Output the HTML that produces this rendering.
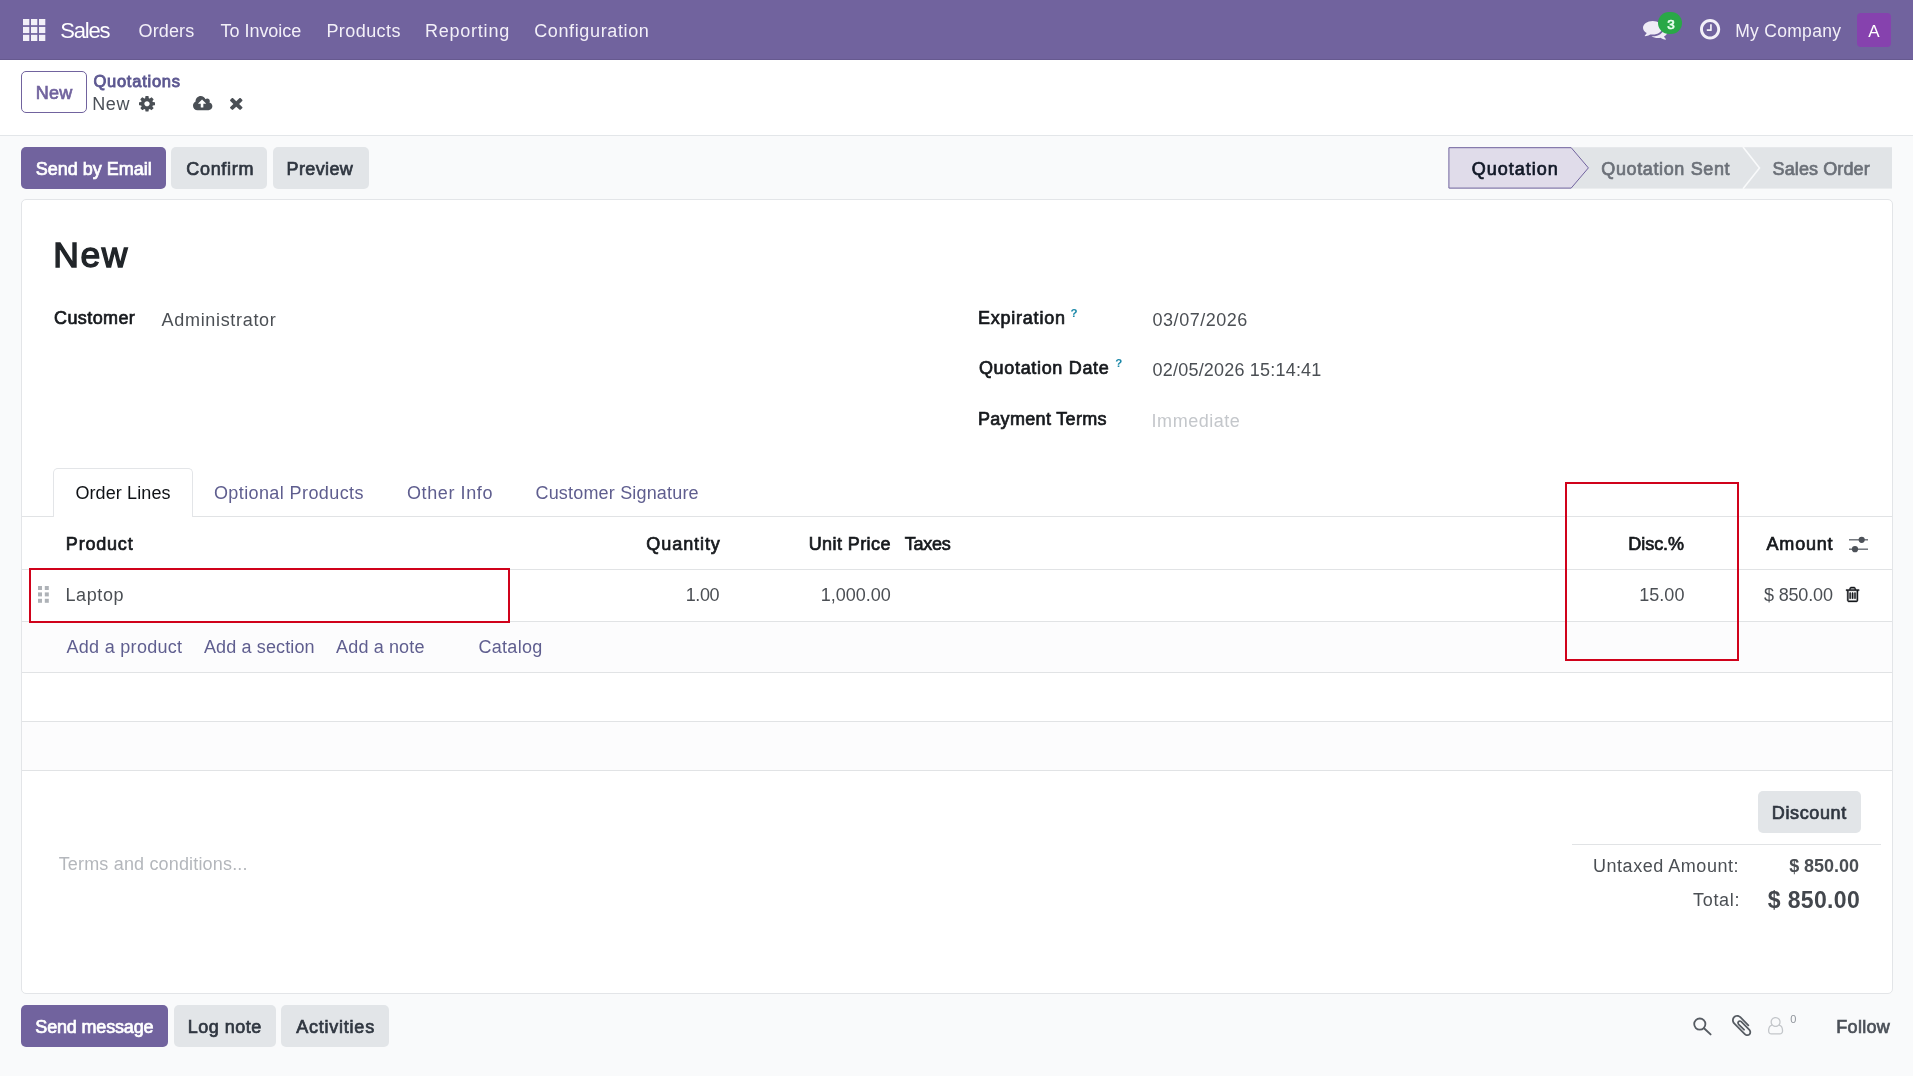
<!DOCTYPE html>
<html lang="en">
<head>
<meta charset="utf-8">
<title>Odoo - New Quotation</title>
<style>
html,body{margin:0;padding:0}
body{width:1913px;height:1076px;overflow:hidden;background:#f9fafb;position:relative;font-family:"Liberation Sans",sans-serif;}
.a{position:absolute;box-sizing:border-box}
.t{position:absolute;white-space:nowrap;line-height:1;font-family:"Liberation Sans",sans-serif;font-weight:normal}
.t.b{font-weight:bold}
.t.m{-webkit-text-stroke:0.7px currentColor}
.t.m2{-webkit-text-stroke:0.85px currentColor}
.t.h{-webkit-text-stroke:1.4px currentColor}
.ic{position:absolute;overflow:visible}
.hl{position:absolute;height:1px;background:#e1e3e5}
.btn{position:absolute;border-radius:5px;box-sizing:border-box}
.sec{background:#e2e5e8}
.pri{background:#71639e}
</style>
</head>
<body>
<!-- navbar -->
<div class="a" style="left:0;top:0;width:1913px;height:60px;background:#71639e;border-bottom:1px solid #66598f"></div>
<svg class="ic" style="left:22.7px;top:19.1px;width:22.3px;height:22px" viewBox="0 0 22.3 22"><g fill="#f3f0f8">
<rect x="0" y="0" width="6.3" height="6.2"/><rect x="8" y="0" width="6.3" height="6.2"/><rect x="16" y="0" width="6.3" height="6.2"/>
<rect x="0" y="7.9" width="6.3" height="6.2"/><rect x="8" y="7.9" width="6.3" height="6.2"/><rect x="16" y="7.9" width="6.3" height="6.2"/>
<rect x="0" y="15.8" width="6.3" height="6.2"/><rect x="8" y="15.8" width="6.3" height="6.2"/><rect x="16" y="15.8" width="6.3" height="6.2"/>
</g></svg>
<svg class="ic" style="left:1642.8px;top:20.7px;width:24.70px;height:18.70px" viewBox="0 -1280 1792 1408.203066359433" preserveAspectRatio="none"><path fill="#efecf6" stroke="#efecf6" stroke-width="0" transform="scale(1,-1)" d="M1408 768C1408 1051 1093 1280 704 1280C315 1280 0 1051 0 768C0 606 104 461 266 367C232 284 188 245 149 201C138 188 125 176 129 157C129 157 129 157 129 157C132 140 146 128 161 128C162 128 163 128 164 128C194 132 223 137 250 144C351 170 445 213 528 272C584 262 643 256 704 256C1093 256 1408 485 1408 768ZM1792 512C1792 679 1682 827 1513 920C1528 871 1536 820 1536 768C1536 589 1444 424 1277 302C1122 190 919 128 704 128C675 128 645 130 616 132C741 50 907 0 1088 0C1149 0 1208 6 1264 16C1347 -43 1441 -86 1542 -112C1569 -119 1598 -124 1628 -128C1644 -130 1659 -117 1663 -99C1663 -99 1663 -99 1663 -99C1667 -80 1654 -68 1643 -55C1604 -11 1560 28 1526 111C1688 205 1792 349 1792 512Z"/></svg>
<div class="a" style="left:1658.3px;top:12.3px;width:24px;height:22px;border-radius:11px;background:#29a847"></div>
<svg class="ic" style="left:1699.8px;top:19.2px;width:20.20px;height:20.60px" viewBox="0 -1408 1536 1536" preserveAspectRatio="none"><path fill="#f3f0f8" stroke="#f3f0f8" stroke-width="0" transform="scale(1,-1)" d="M896 992C896 1010 882 1024 864 1024H800C782 1024 768 1010 768 992V640H544C526 640 512 626 512 608V544C512 526 526 512 544 512H864C882 512 896 526 896 544ZM1312 640C1312 340 1068 96 768 96C468 96 224 340 224 640C224 940 468 1184 768 1184C1068 1184 1312 940 1312 640ZM1536 640C1536 1064 1192 1408 768 1408C344 1408 0 1064 0 640C0 216 344 -128 768 -128C1192 -128 1536 216 1536 640Z"/></svg>
<div class="a" style="left:1857px;top:13px;width:34px;height:33.5px;border-radius:4px;background:#8642ae"></div>

<!-- control panel -->
<div class="a" style="left:0;top:60px;width:1913px;height:76px;background:#fff;border-bottom:1px solid #e3e6e9"></div>
<div class="btn" style="left:21px;top:71px;width:66px;height:42px;background:#fff;border:1px solid #71639e"></div>
<svg class="ic" style="left:138.8px;top:95.7px;width:16.00px;height:15.50px" viewBox="0 -1408 1536 1536" preserveAspectRatio="none"><path fill="#4a4f55" stroke="#4a4f55" stroke-width="0" transform="scale(1,-1)" d="M1024 640C1024 499 909 384 768 384C627 384 512 499 512 640C512 781 627 896 768 896C909 896 1024 781 1024 640ZM1536 749C1536 766 1524 782 1507 785L1324 813C1314 846 1300 879 1283 911C1317 958 1354 1002 1388 1048C1393 1055 1396 1062 1396 1071C1396 1079 1394 1087 1389 1093C1347 1152 1277 1214 1224 1263C1217 1269 1208 1273 1199 1273C1190 1273 1181 1270 1175 1264L1033 1157C1004 1172 974 1184 943 1194L915 1378C913 1395 897 1408 879 1408H657C639 1408 625 1396 621 1380C605 1320 599 1255 592 1194C561 1184 530 1171 501 1156L363 1263C355 1269 346 1273 337 1273C303 1273 168 1127 144 1094C139 1087 135 1080 135 1071C135 1062 139 1054 145 1047C182 1002 218 957 252 909C236 879 223 849 213 817L27 789C12 786 0 768 0 753V531C0 514 12 498 29 495L212 468C222 434 236 401 253 369C219 322 182 278 148 232C143 225 140 218 140 209C140 201 142 193 147 186C189 128 259 66 312 18C319 11 328 7 337 7C346 7 355 10 362 16L503 123C532 108 562 96 593 86L621 -98C623 -115 639 -128 657 -128H879C897 -128 911 -116 915 -100C931 -40 937 25 944 86C975 96 1006 109 1035 124L1173 16C1181 11 1190 7 1199 7C1233 7 1368 154 1392 186C1398 193 1401 200 1401 209C1401 218 1397 227 1391 234C1354 279 1318 323 1284 372C1300 401 1312 431 1323 463L1508 491C1524 494 1536 512 1536 527Z"/></svg>
<svg class="ic" style="left:192.9px;top:95.6px;width:19.40px;height:14.20px" viewBox="0 -1408 1920 1408" preserveAspectRatio="none"><path fill="#4a4f55" stroke="#4a4f55" stroke-width="0" transform="scale(1,-1)" d="M1280 672C1280 655 1266 640 1248 640H1024V288C1024 271 1009 256 992 256H800C783 256 768 271 768 288V640H544C526 640 512 654 512 672C512 681 516 689 522 696L873 1047C879 1053 888 1056 896 1056C905 1056 913 1053 919 1047L1271 695C1277 689 1280 680 1280 672ZM1920 384C1920 562 1797 717 1623 758C1650 799 1664 847 1664 896C1664 1037 1549 1152 1408 1152C1347 1152 1288 1130 1242 1090C1163 1282 976 1408 768 1408C485 1408 256 1179 256 896C256 882 257 868 258 853C101 780 0 622 0 448C0 201 201 0 448 0H1536C1748 0 1920 172 1920 384Z"/></svg>
<svg class="ic" style="left:230.4px;top:98.1px;width:12.50px;height:11.90px" viewBox="110 -1170 1188 1188" preserveAspectRatio="none"><path fill="#4a4f55" stroke="#4a4f55" stroke-width="0" transform="scale(1,-1)" d="M1298 214C1298 239 1288 264 1270 282L976 576L1270 870C1288 888 1298 913 1298 938C1298 963 1288 988 1270 1006L1134 1142C1116 1160 1091 1170 1066 1170C1041 1170 1016 1160 998 1142L704 848L410 1142C392 1160 367 1170 342 1170C317 1170 292 1160 274 1142L138 1006C120 988 110 963 110 938C110 913 120 888 138 870L432 576L138 282C120 264 110 239 110 214C110 189 120 164 138 146L274 10C292 -8 317 -18 342 -18C367 -18 392 -8 410 10L704 304L998 10C1016 -8 1041 -18 1066 -18C1091 -18 1116 -8 1134 10L1270 146C1288 164 1298 189 1298 214Z"/></svg>

<!-- action buttons -->
<div class="btn pri" style="left:21px;top:146.6px;width:145px;height:42px"></div>
<div class="btn sec" style="left:171px;top:146.6px;width:96px;height:42px"></div>
<div class="btn sec" style="left:272.7px;top:146.6px;width:96px;height:42px"></div>

<!-- status bar -->
<svg class="ic" style="left:1440px;top:140px;width:460px;height:56px" viewBox="1440 140 460 56">
<rect x="1450" y="147.2" width="442" height="41.4" fill="#e1e4e7"/>
<polygon points="1448.9,147.7 1571.2,147.7 1588.4,167.9 1571.2,188.1 1448.9,188.1" fill="#e0dcea" stroke="#71639e" stroke-width="1"/>
<polyline points="1743,147 1759.5,167.9 1743,188.8" fill="none" stroke="#f9fafb" stroke-width="1.6"/>
</svg>

<!-- sheet -->
<div class="a" style="left:21px;top:199px;width:1872px;height:795px;background:#fff;border:1px solid #e3e5e8;border-radius:5px"></div>

<!-- notebook tabs -->
<div class="hl" style="left:22px;top:516px;width:1870px"></div>
<div class="a" style="left:53px;top:468px;width:140px;height:49px;background:#fff;border:1px solid #e3e5e8;border-bottom:none;border-radius:5px 5px 0 0"></div>

<!-- table -->
<div class="a" style="left:22px;top:622px;width:1870px;height:50px;background:#fcfcfd"></div>
<div class="a" style="left:22px;top:722px;width:1870px;height:48px;background:#fcfcfd"></div>
<div class="hl" style="left:22px;top:569px;width:1870px"></div>
<div class="hl" style="left:22px;top:621px;width:1870px"></div>
<div class="hl" style="left:22px;top:672px;width:1870px"></div>
<div class="hl" style="left:22px;top:721px;width:1870px"></div>
<div class="hl" style="left:22px;top:770px;width:1870px"></div>
<svg class="ic" style="left:37.8px;top:586.2px;width:11px;height:17px" viewBox="0 0 11 17"><g fill="#aeb2b7">
<rect x="0" y="0" width="4" height="4"/><rect x="6.8" y="0" width="4" height="4"/>
<rect x="0" y="6.4" width="4" height="4"/><rect x="6.8" y="6.4" width="4" height="4"/>
<rect x="0" y="12.8" width="4" height="4"/><rect x="6.8" y="12.8" width="4" height="4"/>
</g></svg>
<svg class="ic" style="left:1848px;top:535px;width:22px;height:19px" viewBox="1848 535 22 19">
<g stroke="#666b72" stroke-width="1.4" fill="none"><line x1="1849" y1="539.8" x2="1868" y2="539.8"/><line x1="1849" y1="549.2" x2="1868" y2="549.2"/></g>
<circle cx="1861.7" cy="539.8" r="3.1" fill="#4d5259"/><circle cx="1855" cy="549.2" r="3.1" fill="#4d5259"/>
</svg>
<svg class="ic" style="left:1846.3px;top:586.9px;width:13.20px;height:14.90px" viewBox="0 -1408 1408 1536" preserveAspectRatio="none"><path fill="#15181c" stroke="#15181c" stroke-width="45.0" transform="scale(1,-1)" d="M512 800C512 818 498 832 480 832H416C398 832 384 818 384 800V224C384 206 398 192 416 192H480C498 192 512 206 512 224ZM768 800C768 818 754 832 736 832H672C654 832 640 818 640 800V224C640 206 654 192 672 192H736C754 192 768 206 768 224ZM1024 800C1024 818 1010 832 992 832H928C910 832 896 818 896 800V224C896 206 910 192 928 192H992C1010 192 1024 206 1024 224ZM1152 76C1152 28 1125 0 1120 0H288C283 0 256 28 256 76V1024H1152V76ZM480 1152 529 1269C532 1273 540 1279 546 1280H863C868 1279 877 1273 880 1269L928 1152ZM1408 1120C1408 1138 1394 1152 1376 1152H1067L997 1319C977 1368 917 1408 864 1408H544C491 1408 431 1368 411 1319L341 1152H32C14 1152 0 1138 0 1120V1056C0 1038 14 1024 32 1024H128V72C128 -38 200 -128 288 -128H1120C1208 -128 1280 -34 1280 76V1024H1376C1394 1024 1408 1038 1408 1056Z"/></svg>

<!-- red highlight boxes -->
<div class="a" style="left:29px;top:567.5px;width:481px;height:55.5px;border:2px solid #d0021b"></div>
<div class="a" style="left:1565px;top:482px;width:174px;height:178.7px;border:2px solid #d0021b"></div>

<!-- totals -->
<div class="btn sec" style="left:1758.2px;top:790.8px;width:102.8px;height:42px"></div>
<div class="hl" style="left:1572.4px;top:844px;width:308.3px"></div>

<!-- chatter -->
<div class="btn pri" style="left:21px;top:1005px;width:147px;height:42px"></div>
<div class="btn sec" style="left:173.8px;top:1005px;width:102px;height:42px"></div>
<div class="btn sec" style="left:281px;top:1005px;width:107.6px;height:42px"></div>
<svg class="ic" style="left:1690px;top:1014px;width:24px;height:24px" viewBox="1690 1014 24 24"><circle cx="1699.8" cy="1024.1" r="5.6" fill="none" stroke="#565b62" stroke-width="1.8"/><line x1="1704" y1="1028.2" x2="1710.6" y2="1034.4" stroke="#565b62" stroke-width="1.9" stroke-linecap="round"/></svg>
<svg class="ic" style="left:1731.8px;top:1014.9px;width:19.20px;height:21.10px" viewBox="4 -1404 1400 1528" preserveAspectRatio="none"><path fill="#565b62" stroke="#565b62" stroke-width="0" transform="scale(1,-1)" d="M1404 151C1404 239 1367 324 1304 386L723 967C684 1007 630 1030 574 1030C464 1030 378 944 378 834C378 779 401 724 441 685L851 275C857 269 865 265 873 265C894 265 951 322 951 343C951 351 947 359 941 365L531 775C516 791 506 812 506 834C506 873 535 901 573 901C595 901 617 892 633 877L1214 296C1252 258 1277 206 1277 151C1277 66 1214 3 1129 3C1075 3 1022 28 984 66L208 843C160 891 132 956 132 1024C132 1165 242 1280 384 1280C452 1280 517 1250 565 1203L1171 596C1177 590 1185 586 1194 586C1215 586 1271 642 1271 663C1271 671 1267 679 1261 685L656 1291C583 1363 485 1404 383 1404C171 1404 4 1235 4 1023C4 922 46 824 117 752L894 -24C956 -86 1041 -124 1129 -124C1285 -124 1404 -5 1404 151Z"/></svg>
<svg class="ic" style="left:1768.0px;top:1017.0px;width:15.20px;height:17.60px" viewBox="0 -1536 1536 1792" preserveAspectRatio="none"><path fill="#c3c6ca" stroke="#c3c6ca" stroke-width="0" transform="scale(1,-1)" d="M1201 752C1251 831 1280 924 1280 1024C1280 1306 1050 1536 768 1536C486 1536 256 1306 256 1024C256 924 285 831 335 752C194 711 0 572 0 117C0 -89 153 -256 341 -256H1195C1383 -256 1536 -89 1536 117C1536 572 1342 711 1201 752ZM768 1408C980 1408 1152 1236 1152 1024C1152 812 980 640 768 640C556 640 384 812 384 1024C384 1236 556 1408 768 1408ZM1195 -128H341C224 -128 128 -19 128 117C128 432 234 629 432 639C522 560 639 512 768 512C897 512 1014 560 1104 639C1302 629 1408 432 1408 117C1408 -19 1312 -128 1195 -128Z"/></svg>

<div class="a" style="left:0;top:0;width:1913px;height:1076px;will-change:transform">
<span class="t" style="left:60.20px;top:19.60px;font-size:22px;color:#ffffff;letter-spacing:-1.158px;">Sales</span>
<span class="t" style="left:138.50px;top:22.30px;font-size:18px;color:#f3f0f8;letter-spacing:0.138px;">Orders</span>
<span class="t" style="left:220.60px;top:22.30px;font-size:18px;color:#f3f0f8;letter-spacing:-0.048px;">To Invoice</span>
<span class="t" style="left:326.40px;top:22.30px;font-size:18px;color:#f3f0f8;letter-spacing:0.438px;">Products</span>
<span class="t" style="left:424.90px;top:22.30px;font-size:18px;color:#f3f0f8;letter-spacing:0.783px;">Reporting</span>
<span class="t" style="left:534.20px;top:22.30px;font-size:18px;color:#f3f0f8;letter-spacing:0.629px;">Configuration</span>
<span class="t" style="left:1735.20px;top:22.80px;font-size:17.5px;color:#f3f0f8;letter-spacing:0.296px;">My Company</span>
<span class="t" style="left:1868.20px;top:22.80px;font-size:17px;color:#ffffff;">A</span>
<span class="t m" style="left:1667.35px;top:18.00px;font-size:13.5px;color:#eafff0;">3</span>
<span class="t m" style="left:35.85px;top:84.20px;font-size:18px;color:#71639e;letter-spacing:0.145px;">New</span>
<span class="t m2" style="left:93.42px;top:72.80px;font-size:16.5px;color:#5d5891;letter-spacing:0.755px;">Quotations</span>
<span class="t" style="left:92.20px;top:95.20px;font-size:18px;color:#4b5058;letter-spacing:0.595px;">New</span>
<span class="t m" style="left:35.65px;top:159.80px;font-size:18px;color:#ffffff;letter-spacing:0.012px;">Send by Email</span>
<span class="t m" style="left:186.25px;top:159.80px;font-size:18px;color:#2f3640;letter-spacing:0.698px;">Confirm</span>
<span class="t m" style="left:286.55px;top:159.80px;font-size:18px;color:#2f3640;letter-spacing:0.380px;">Preview</span>
<span class="t m" style="left:1471.75px;top:159.80px;font-size:18px;color:#111827;letter-spacing:1.007px;">Quotation</span>
<span class="t m" style="left:1601.25px;top:159.80px;font-size:18px;color:#6b7078;letter-spacing:0.632px;">Quotation Sent</span>
<span class="t m" style="left:1772.55px;top:159.80px;font-size:18px;color:#6b7078;letter-spacing:0.106px;">Sales Order</span>
<span class="t h" style="left:53.30px;top:237.90px;font-size:35.5px;color:#212529;letter-spacing:1.510px;">New</span>
<span class="t m" style="left:54.05px;top:308.70px;font-size:18px;color:#16191d;letter-spacing:0.396px;">Customer</span>
<span class="t" style="left:161.60px;top:310.70px;font-size:18px;color:#4b4f54;letter-spacing:0.680px;">Administrator</span>
<span class="t m" style="left:977.95px;top:308.50px;font-size:18px;color:#16191d;letter-spacing:0.774px;">Expiration</span>
<span class="t b" style="left:1070.60px;top:307.80px;font-size:11.5px;color:#1b88a8;">?</span>
<span class="t" style="left:1152.60px;top:311.00px;font-size:18px;color:#4b4f54;letter-spacing:0.503px;">03/07/2026</span>
<span class="t m" style="left:978.95px;top:358.60px;font-size:18px;color:#16191d;letter-spacing:0.672px;">Quotation Date</span>
<span class="t b" style="left:1115.30px;top:358.00px;font-size:11.5px;color:#1b88a8;">?</span>
<span class="t" style="left:1152.60px;top:361.40px;font-size:18px;color:#4b4f54;letter-spacing:0.198px;">02/05/2026 15:14:41</span>
<span class="t m" style="left:977.95px;top:409.50px;font-size:18px;color:#16191d;letter-spacing:0.322px;">Payment Terms</span>
<span class="t" style="left:1151.60px;top:411.50px;font-size:18px;color:#c4c7cb;letter-spacing:0.522px;">Immediate</span>
<span class="t" style="left:75.40px;top:483.70px;font-size:18px;color:#0f1216;letter-spacing:0.116px;">Order Lines</span>
<span class="t" style="left:213.90px;top:483.70px;font-size:18px;color:#5f5e8f;letter-spacing:0.408px;">Optional Products</span>
<span class="t" style="left:407.00px;top:483.70px;font-size:18px;color:#5f5e8f;letter-spacing:0.597px;">Other Info</span>
<span class="t" style="left:535.50px;top:483.70px;font-size:18px;color:#5f5e8f;letter-spacing:0.179px;">Customer Signature</span>
<span class="t m" style="left:65.85px;top:535.00px;font-size:18px;color:#16191d;letter-spacing:0.795px;">Product</span>
<span class="t m" style="left:646.35px;top:535.00px;font-size:18px;color:#16191d;letter-spacing:0.924px;">Quantity</span>
<span class="t m" style="left:808.65px;top:535.00px;font-size:18px;color:#16191d;letter-spacing:0.421px;">Unit Price</span>
<span class="t m" style="left:904.65px;top:535.00px;font-size:18px;color:#16191d;letter-spacing:-0.255px;">Taxes</span>
<span class="t m" style="left:1628.25px;top:535.00px;font-size:18px;color:#16191d;letter-spacing:-0.040px;">Disc.%</span>
<span class="t m" style="left:1766.55px;top:535.00px;font-size:18px;color:#16191d;letter-spacing:0.794px;">Amount</span>
<span class="t" style="left:65.50px;top:585.80px;font-size:18px;color:#4b4f54;letter-spacing:0.591px;">Laptop</span>
<span class="t" style="left:685.70px;top:585.80px;font-size:18px;color:#4b4f54;letter-spacing:-0.407px;">1.00</span>
<span class="t" style="left:820.80px;top:585.80px;font-size:18px;color:#4b4f54;letter-spacing:-0.008px;">1,000.00</span>
<span class="t" style="left:1639.20px;top:585.80px;font-size:18px;color:#4b4f54;letter-spacing:0.042px;">15.00</span>
<span class="t" style="left:1764.00px;top:585.80px;font-size:18px;color:#4b4f54;letter-spacing:-0.165px;">$ 850.00</span>
<span class="t" style="left:66.50px;top:638.40px;font-size:18px;color:#5f5e8f;letter-spacing:0.294px;">Add a product</span>
<span class="t" style="left:203.90px;top:638.40px;font-size:18px;color:#5f5e8f;letter-spacing:0.137px;">Add a section</span>
<span class="t" style="left:336.10px;top:638.40px;font-size:18px;color:#5f5e8f;letter-spacing:0.137px;">Add a note</span>
<span class="t" style="left:478.50px;top:638.40px;font-size:18px;color:#5f5e8f;letter-spacing:0.278px;">Catalog</span>
<span class="t" style="left:58.70px;top:854.80px;font-size:18px;color:#b4b7bc;letter-spacing:0.169px;">Terms and conditions...</span>
<span class="t m" style="left:1771.85px;top:803.50px;font-size:18px;color:#2f3640;letter-spacing:0.610px;">Discount</span>
<span class="t" style="left:1593.00px;top:856.60px;font-size:18px;color:#4b4f54;letter-spacing:0.530px;">Untaxed Amount:</span>
<span class="t b" style="left:1789.20px;top:856.60px;font-size:18px;color:#4b4f54;letter-spacing:-0.051px;">$ 850.00</span>
<span class="t" style="left:1693.00px;top:891.00px;font-size:18px;color:#4b4f54;letter-spacing:0.696px;">Total:</span>
<span class="t b" style="left:1767.80px;top:888.60px;font-size:23px;color:#43474d;letter-spacing:0.337px;">$ 850.00</span>
<span class="t m" style="left:35.35px;top:1017.60px;font-size:18px;color:#ffffff;letter-spacing:-0.170px;">Send message</span>
<span class="t m" style="left:187.65px;top:1017.60px;font-size:18px;color:#2f3640;letter-spacing:0.492px;">Log note</span>
<span class="t m" style="left:296.25px;top:1017.60px;font-size:18px;color:#2f3640;letter-spacing:0.765px;">Activities</span>
<span class="t" style="left:1790.20px;top:1014.40px;font-size:11px;color:#8f949b;">0</span>
<span class="t m" style="left:1836.25px;top:1017.50px;font-size:18px;color:#4b5058;letter-spacing:0.317px;">Follow</span>
</div>
</body>
</html>
